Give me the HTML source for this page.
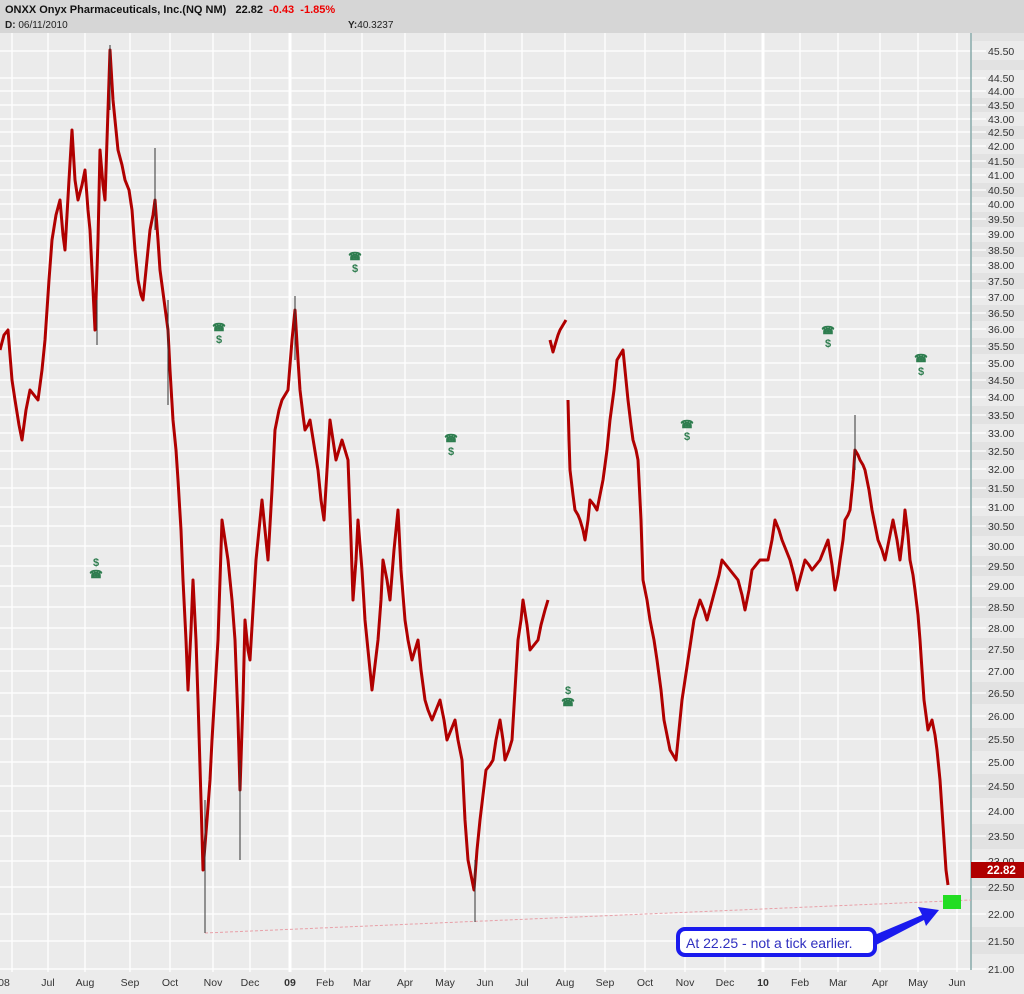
<!DOCTYPE html>
<html><head><meta charset="utf-8"><style>
body{margin:0;width:1024px;height:994px;overflow:hidden;background:#ebebeb;font-family:"Liberation Sans",sans-serif}
</style></head><body>
<svg width="1024" height="994" xmlns="http://www.w3.org/2000/svg" style="position:absolute;left:0;top:0">
<rect x="0" y="0" width="1024" height="994" fill="#ebebeb"/>
<g fill="#e2e2e2">
<rect x="972" y="33" width="52" height="8"/><rect x="972" y="60" width="52" height="10"/><rect x="972" y="98" width="52" height="14"/><rect x="972" y="126" width="52" height="13"/><rect x="972" y="154" width="52" height="14"/><rect x="972" y="183" width="52" height="14"/><rect x="972" y="212" width="52" height="15"/><rect x="972" y="242" width="52" height="15"/><rect x="972" y="273" width="52" height="16"/><rect x="972" y="305" width="52" height="16"/><rect x="972" y="338" width="52" height="16"/><rect x="972" y="372" width="52" height="17"/><rect x="972" y="406" width="52" height="18"/><rect x="972" y="442" width="52" height="18"/><rect x="972" y="479" width="52" height="19"/><rect x="972" y="516" width="52" height="20"/><rect x="972" y="556" width="52" height="20"/><rect x="972" y="597" width="52" height="21"/><rect x="972" y="638" width="52" height="22"/><rect x="972" y="682" width="52" height="22"/><rect x="972" y="728" width="52" height="23"/><rect x="972" y="774" width="52" height="24"/><rect x="972" y="824" width="52" height="25"/><rect x="972" y="874" width="52" height="26"/><rect x="972" y="927" width="52" height="27"/>
</g>
<g stroke="#fff" stroke-width="1.3">
<path d="M0 51H986M0 78H986M0 91H986M0 105H986M0 119H986M0 132H986M0 146H986M0 161H986M0 175H986M0 190H986M0 204H986M0 219H986M0 234H986M0 250H986M0 265H986M0 281H986M0 297H986M0 313H986M0 329H986M0 346H986M0 363H986M0 380H986M0 397H986M0 415H986M0 433H986M0 451H986M0 469H986M0 488H986M0 507H986M0 526H986M0 546H986M0 566H986M0 586H986M0 607H986M0 628H986M0 649H986M0 671H986M0 693H986M0 716H986M0 739H986M0 762H986M0 786H986M0 811H986M0 836H986M0 861H986M0 887H986M0 914H986M0 941H986M0 969H986"/>
<path d="M12 33V972M48 33V972M85 33V972M130 33V972M170 33V972M213 33V972M250 33V972M325 33V972M362 33V972M405 33V972M445 33V972M485 33V972M522 33V972M565 33V972M605 33V972M645 33V972M685 33V972M725 33V972M800 33V972M838 33V972M880 33V972M918 33V972M957 33V972"/>
<path d="M290 33V972M763 33V972" stroke-width="3"/>
</g>
<line x1="971" y1="33" x2="971" y2="970" stroke="#8aa" stroke-width="1.5"/>
<rect x="0" y="0" width="1024" height="33" fill="#d6d6d6"/>
<text x="5" y="13" font-size="11" font-weight="bold" fill="#111">ONXX Onyx Pharmaceuticals, Inc.(NQ NM)&#160;&#160;&#160;22.82 <tspan fill="#e00">&#160;-0.43 &#160;-1.85%</tspan></text>
<text x="5" y="28" font-size="10" fill="#222"><tspan font-weight="bold">D:</tspan> 06/11/2010</text>
<text x="348" y="28" font-size="10" fill="#222"><tspan font-weight="bold">Y:</tspan>40.3237</text>
<line x1="205" y1="933" x2="971" y2="900" stroke="#e8a0a8" stroke-width="1" stroke-dasharray="3,2"/>
<g fill="none" stroke="#b00000" stroke-width="3" stroke-linejoin="round">
<polyline points="0,350 4,335 8,330 12,380 15,400 19,425 22,440 26,410 30,390 34,395 38,400 42,370 45,340 49,280 52,240 56,215 60,200 63,235 65,250 69,180 72,130 75,180 78,200 82,185 85,170 88,210 90,230 93,290 95,330 98,240 100,150 103,185 105,200 108,110 110,50 113,100 116,130 118,150 122,165 125,180 129,190 132,210 135,250 138,280 141,295 143,300 147,260 150,230 153,215 155,200 158,240 160,270 164,300 168,330 170,370 173,420 176,450 178,480 181,530 183,580 186,640 188,690 191,630 193,580 196,640 198,700 201,800 203,870 205,845 207,820 210,780 212,740 215,690 218,640 220,580 222,520 225,540 228,560 232,600 235,640 238,720 240,790 243,700 245,620 248,650 250,660 253,610 256,560 259,530 262,500 265,530 268,560 272,490 275,430 279,410 282,400 285,395 288,390 292,340 295,310 298,360 300,390 303,415 305,430 308,425 310,420 314,445 318,470 321,500 324,520 327,470 330,420 333,440 336,460 339,450 342,440 345,450 348,460 351,540 353,600 356,560 358,520 362,570 365,620 369,660 372,690 375,665 378,640 381,600 383,560 387,580 390,600 394,550 398,510 401,570 405,620 408,640 412,660 415,650 418,640 421,670 425,700 428,710 432,720 436,710 440,700 444,720 447,740 451,730 455,720 458,740 462,760 465,820 468,860 471,875 474,890 477,850 480,820 483,795 486,770 490,765 493,760 496,740 500,720 503,740 505,760 509,750 512,740 515,690 518,640 521,620 523,600 527,625 530,650 534,645 538,640 541,625 545,610 548,600"/>
<polyline points="550,340 553,352 555,345 558,335 560,330 563,325 566,320"/>
<polyline points="568,400 569,440 570,470 573,495 575,510 578,515 580,520 583,530 585,540 588,520 590,500 594,505 597,510 600,495 603,480 607,450 610,420 614,390 617,360 620,355 623,350 626,380 628,400 631,425 633,440 636,450 638,460 641,520 643,580 647,600 650,620 654,640 657,660 661,690 664,720 667,735 670,750 673,755 676,760 679,730 682,700 685,680 688,660 691,640 694,620 697,610 700,600 704,610 707,620 711,605 715,590 719,575 722,560 726,565 730,570 734,575 738,580 742,595 745,610 749,590 752,570 756,565 760,560 764,560 768,560 772,540 775,520 779,530 782,540 786,550 790,560 794,575 797,590 801,575 805,560 809,565 812,570 816,565 820,560 824,550 828,540 832,565 835,590 838,575 840,560 843,540 845,520 848,515 850,510 853,480 855,450 858,455 860,460 863,465 865,470 869,490 872,510 875,525 878,540 882,550 885,560 889,540 893,520 897,540 900,560 903,535 905,510 908,535 910,560 913,575 915,590 918,615 920,640 922,670 924,700 926,715 928,730 930,725 932,720 935,735 937,750 940,780 942,810 944,840 946,870 948,885"/>
</g>
<g stroke="#333" stroke-width="1">
<line x1="110" y1="45" x2="110" y2="110"/><line x1="155" y1="148" x2="155" y2="230"/><line x1="205" y1="800" x2="205" y2="933"/><line x1="240" y1="760" x2="240" y2="860"/><line x1="295" y1="296" x2="295" y2="360"/><line x1="475" y1="860" x2="475" y2="922"/><line x1="855" y1="415" x2="855" y2="470"/><line x1="97" y1="300" x2="97" y2="345"/><line x1="168" y1="300" x2="168" y2="405"/>
</g>
<g fill="#2e7d4f" font-size="11" font-weight="bold" text-anchor="middle">
<text x="96" y="566">$</text><text x="96" y="578">☎</text>
<text x="219" y="331">☎</text><text x="219" y="343">$</text>
<text x="355" y="260">☎</text><text x="355" y="272">$</text>
<text x="451" y="442">☎</text><text x="451" y="455">$</text>
<text x="568" y="694">$</text><text x="568" y="706">☎</text>
<text x="687" y="428">☎</text><text x="687" y="440">$</text>
<text x="828" y="334">☎</text><text x="828" y="347">$</text>
<text x="921" y="362">☎</text><text x="921" y="375">$</text>
</g>
<rect x="943" y="895" width="18" height="14" fill="#22dd22"/>
<g font-size="10.5" fill="#333">
<text x="988" y="55">45.50</text><text x="988" y="82">44.50</text><text x="988" y="95">44.00</text><text x="988" y="109">43.50</text><text x="988" y="123">43.00</text><text x="988" y="136">42.50</text><text x="988" y="150">42.00</text><text x="988" y="165">41.50</text><text x="988" y="179">41.00</text><text x="988" y="194">40.50</text><text x="988" y="208">40.00</text><text x="988" y="223">39.50</text><text x="988" y="238">39.00</text><text x="988" y="254">38.50</text><text x="988" y="269">38.00</text><text x="988" y="285">37.50</text><text x="988" y="301">37.00</text><text x="988" y="317">36.50</text><text x="988" y="333">36.00</text><text x="988" y="350">35.50</text><text x="988" y="367">35.00</text><text x="988" y="384">34.50</text><text x="988" y="401">34.00</text><text x="988" y="419">33.50</text><text x="988" y="437">33.00</text><text x="988" y="455">32.50</text><text x="988" y="473">32.00</text><text x="988" y="492">31.50</text><text x="988" y="511">31.00</text><text x="988" y="530">30.50</text><text x="988" y="550">30.00</text><text x="988" y="570">29.50</text><text x="988" y="590">29.00</text><text x="988" y="611">28.50</text><text x="988" y="632">28.00</text><text x="988" y="653">27.50</text><text x="988" y="675">27.00</text><text x="988" y="697">26.50</text><text x="988" y="720">26.00</text><text x="988" y="743">25.50</text><text x="988" y="766">25.00</text><text x="988" y="790">24.50</text><text x="988" y="815">24.00</text><text x="988" y="840">23.50</text><text x="988" y="865">23.00</text><text x="988" y="891">22.50</text><text x="988" y="918">22.00</text><text x="988" y="945">21.50</text><text x="988" y="973">21.00</text>
</g>
<rect x="971" y="862" width="53" height="16" fill="#b00000"/>
<text x="987" y="874" font-size="11.5" font-weight="bold" fill="#fff">22.82</text>
<g font-size="10.5" fill="#333" text-anchor="middle">
<text x="4" y="986">08</text><text x="48" y="986">Jul</text><text x="85" y="986">Aug</text><text x="130" y="986">Sep</text><text x="170" y="986">Oct</text><text x="213" y="986">Nov</text><text x="250" y="986">Dec</text><text x="290" y="986" font-weight="bold">09</text><text x="325" y="986">Feb</text><text x="362" y="986">Mar</text><text x="405" y="986">Apr</text><text x="445" y="986">May</text><text x="485" y="986">Jun</text><text x="522" y="986">Jul</text><text x="565" y="986">Aug</text><text x="605" y="986">Sep</text><text x="645" y="986">Oct</text><text x="685" y="986">Nov</text><text x="725" y="986">Dec</text><text x="763" y="986" font-weight="bold">10</text><text x="800" y="986">Feb</text><text x="838" y="986">Mar</text><text x="880" y="986">Apr</text><text x="918" y="986">May</text><text x="957" y="986">Jun</text>
</g>
<path d="M872,936 L922,915 L918,907 L939,910 L926,926 L924,920 L876,945 Z" fill="#1a1aee"/>
<rect x="678" y="929" width="197" height="26" rx="7" fill="#fff" stroke="#1a1aee" stroke-width="4"/>
<text x="686" y="948" font-size="14" fill="#3030c0">At 22.25 - not a tick earlier.</text>
</svg>
</body></html>
